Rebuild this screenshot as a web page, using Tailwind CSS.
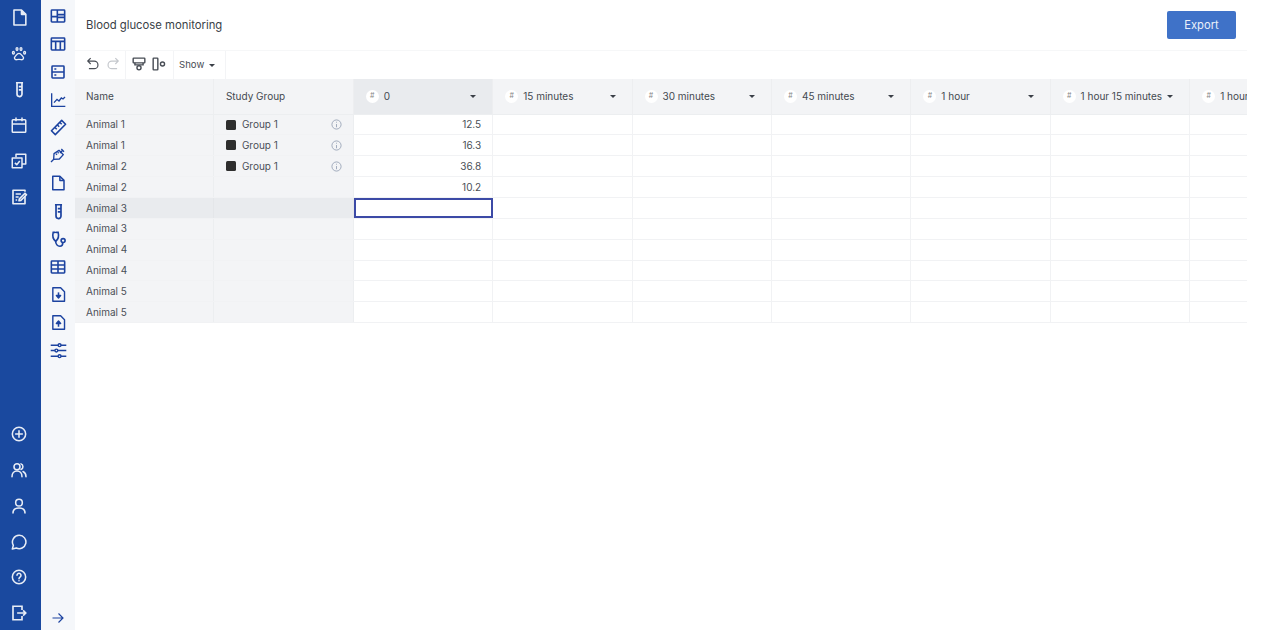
<!doctype html>
<html>
<head>
<meta charset="utf-8">
<script src="https://cdn.jsdelivr.net/npm/@tailwindcss/browser@4"></script>
</head>
<body class="bg-white">
<div class="flex h-[630px] w-[1282px] overflow-hidden font-['Inter',sans-serif] text-[#444950]">
  <!-- primary nav -->
  <nav class="flex h-[631px] w-[41px] shrink-0 flex-col items-center justify-between bg-[#1a499f] pr-[3px] text-[#e8edf6]">
    <div class="flex flex-col">
      <div class="flex h-[35.8px] items-center justify-center"><svg class="w-[19px] h-[19px]" viewBox="0 0 24 24" fill="none" stroke="currentColor" stroke-width="2" stroke-linejoin="round"><path d="M5 2.500h9.500L20 8v13.500H5z"/><path d="M14.500 2.500V8H20" fill="currentColor"/></svg></div>
      <div class="flex h-[35.8px] items-center justify-center"><svg class="w-[16px] h-[16px]" viewBox="0 0 24 24" fill="none" stroke="currentColor" stroke-width="2" stroke-linejoin="round"><ellipse cx="3.600" cy="10" rx="1.400" ry="2"/><ellipse cx="9" cy="4.600" rx="1.400" ry="2.200"/><ellipse cx="15" cy="4.600" rx="1.400" ry="2.200"/><ellipse cx="20.400" cy="10" rx="1.400" ry="2"/><path d="M12 11c-3 0-4 3-6 5-2 2.500 0 5 2.500 4.500 2-.4 5-.4 7 0 2.500.5 4.500-2 2.500-4.500-2-2-3-5-6-5z"/></svg></div>
      <div class="flex h-[35.8px] items-center justify-center"><svg class="w-[17px] h-[17px]" viewBox="0 0 24 24" fill="none" stroke="currentColor" stroke-width="2.400" stroke-linejoin="round"><path d="M7 2.500h10M8.500 2.500v16a3.500 3.500 0 0 0 7 0v-16"/><path d="M11 8h4.500M11 12.500h4.500"/></svg></div>
      <div class="flex h-[35.8px] items-center justify-center"><svg class="w-[18px] h-[18px]" viewBox="0 0 24 24" fill="none" stroke="currentColor" stroke-width="2"><rect x="3" y="5" width="18" height="16.500" rx="1"/><path d="M3 10.500h18M8 2v5M16 2v5"/></svg></div>
      <div class="flex h-[35.8px] items-center justify-center"><svg class="w-[18px] h-[18px]" viewBox="0 0 24 24" fill="none" stroke="currentColor" stroke-width="2" stroke-linejoin="round"><path d="M8 7V3h13v13h-5"/><rect x="3" y="8" width="13" height="13"/><path d="M6.500 14.500l2.500 2.500 4-5"/></svg></div>
      <div class="flex h-[35.8px] items-center justify-center"><svg class="w-[18px] h-[18px]" viewBox="0 0 24 24" fill="none" stroke="currentColor" stroke-width="2.200" stroke-linejoin="round"><path d="M20 11v10H4V3h16v2"/><path d="M7.500 8h7M7.500 12h4M7.500 16h2"/><path d="M12 17l.5-2.500L20 7l2 2-7.500 7.500z"/></svg></div>
    </div>
    <div class="flex flex-col">
      <div class="flex h-[35.8px] items-center justify-center"><svg class="w-[16px] h-[16px]" viewBox="0 0 24 24" fill="none" stroke="currentColor" stroke-width="2.300" stroke-linecap="round"><circle cx="12" cy="12" r="10"/><path d="M12 7v10M7 12h10"/></svg></div>
      <div class="flex h-[35.8px] items-center justify-center"><svg class="w-[16px] h-[16px]" viewBox="0 0 24 24" fill="none" stroke="currentColor" stroke-width="2.300" stroke-linecap="round"><circle cx="9" cy="7" r="4.500"/><path d="M1.500 22c0-5 3-8.500 7.500-8.500s7.500 3.500 7.500 8.500"/><path d="M15 2.800a4.500 4.500 0 0 1 0 8.400M18 14.300c2.800 1.200 4.500 4 4.500 7.700"/></svg></div>
      <div class="flex h-[35.8px] items-center justify-center"><svg class="w-[16px] h-[16px]" viewBox="0 0 24 24" fill="none" stroke="currentColor" stroke-width="2.300" stroke-linecap="round"><circle cx="12" cy="7" r="5"/><path d="M3 22.500c0-5 3.500-7.500 9-7.500s9 2.500 9 7.500"/></svg></div>
      <div class="flex h-[35.8px] items-center justify-center"><svg class="w-[16px] h-[16px]" viewBox="0 0 24 24" fill="none" stroke="currentColor" stroke-width="2.300" stroke-linejoin="round"><path d="M12.500 2a10 10 0 1 1-4.500 19L2 22.500l1.500-5.500A10 10 0 0 1 12.500 2z"/></svg></div>
      <div class="flex h-[35.8px] items-center justify-center"><svg class="w-[16px] h-[16px]" viewBox="0 0 24 24" fill="none" stroke="currentColor" stroke-width="2.300" stroke-linecap="round"><circle cx="12" cy="12" r="10"/><path d="M9 9.500a3 3 0 1 1 4.500 2.600c-1 .6-1.500 1.200-1.500 2.400M12 17.500v.1"/></svg></div>
      <div class="flex h-[35.8px] items-center justify-center"><svg class="w-[18px] h-[18px]" viewBox="0 0 24 24" fill="none" stroke="currentColor" stroke-width="2.200"><path d="M16 8V3H4v18h12v-5"/><path d="M9.500 12H21M17.500 8.500L21 12l-3.500 3.500"/></svg></div>
    </div>
  </nav>
  <!-- secondary nav -->
  <nav class="flex h-[630px] w-[34px] shrink-0 flex-col items-center justify-between bg-[#f5f7fa] pt-[2px] text-[#1c43a0]">
    <div class="flex flex-col">
      <div class="flex h-[27.9px] items-center justify-center"><svg class="w-[16px] h-[16px]" viewBox="0 0 24 24" fill="none" stroke="currentColor" stroke-width="2.400"><rect x="2" y="3" width="20" height="18" rx="1"/><path d="M11 3v18M11 10h11M2 13h9M11 14h11"/></svg></div>
      <div class="flex h-[27.9px] items-center justify-center"><svg class="w-[16px] h-[16px]" viewBox="0 0 24 24" fill="none" stroke="currentColor" stroke-width="2.400"><rect x="2" y="3" width="20" height="18" rx="1"/><path d="M2 8h20M8.500 8v13M15.500 8v13"/></svg></div>
      <div class="flex h-[27.9px] items-center justify-center"><svg class="w-[16px] h-[16px]" viewBox="0 0 24 24" fill="none" stroke="currentColor" stroke-width="2.400"><rect x="3" y="3" width="18" height="18" rx="1"/><path d="M3 12h18M6.500 7.500h3M6.500 16.500h3"/></svg></div>
      <div class="flex h-[27.9px] items-center justify-center"><svg class="w-[16px] h-[16px]" viewBox="0 0 24 24" fill="none" stroke="currentColor" stroke-width="2"><path d="M2.500 2v19.500H23"/><path d="M6 16l4.500-5 3 2.500 3.500-4.500 2.500 1.500 3-3"/></svg></div>
      <div class="flex h-[27.9px] items-center justify-center"><svg class="w-[17px] h-[17px]" viewBox="0 0 24 24" fill="none" stroke="currentColor" stroke-width="2.200" stroke-linejoin="round"><path d="M2 16.500L16.500 2 22 7.500 7.500 22z"/><path d="M7 12l2.500 2.500M10.500 8.500l2.500 2.500M14 5l2.500 2.500"/></svg></div>
      <div class="flex h-[27.9px] items-center justify-center"><svg class="w-[16px] h-[16px]" viewBox="0 0 24 24" fill="none" stroke="currentColor" stroke-width="2" stroke-linejoin="round"><path d="M1.500 22.500L6 18M17 3l4 4M19 5l-4 4"/><path d="M6 10l-.5 8.500 8.500-.5 6-6.500-6.500-6.500z"/><path d="M9 10l1.500 1.500M11.500 8l1.500 1.500"/></svg></div>
      <div class="flex h-[27.9px] items-center justify-center"><svg class="w-[18px] h-[18px]" viewBox="0 0 24 24" fill="none" stroke="currentColor" stroke-width="2" stroke-linejoin="round"><path d="M5 3h9.500L20 8.500V21H5z"/><path d="M14.500 3v5.500H20"/></svg></div>
      <div class="flex h-[27.9px] items-center justify-center"><svg class="w-[17px] h-[17px]" viewBox="0 0 24 24" fill="none" stroke="currentColor" stroke-width="2.400" stroke-linejoin="round"><path d="M7 2.500h10M8.500 2.500v16a3.500 3.500 0 0 0 7 0v-16"/><path d="M11 8h4.500M11 12.500h4.500"/></svg></div>
      <div class="flex h-[27.9px] items-center justify-center"><svg class="w-[17px] h-[17px]" viewBox="0 0 24 24" fill="none" stroke="currentColor" stroke-width="2.300" stroke-linecap="round"><path d="M7 2H4.500C3.500 6 3 11 8 14.500 13 11 12.500 6 11.500 2H9"/><path d="M8 14.500c0 4 2.500 7 6 7 3 0 4-2 4-5"/><circle cx="18.500" cy="13.500" r="2.800"/></svg></div>
      <div class="flex h-[27.9px] items-center justify-center"><svg class="w-[16px] h-[16px]" viewBox="0 0 24 24" fill="none" stroke="currentColor" stroke-width="2.400"><rect x="2" y="3" width="20" height="18" rx="1"/><path d="M2 9h20M2 15h20M12 3v18"/></svg></div>
      <div class="flex h-[27.9px] items-center justify-center"><svg class="w-[17px] h-[17px]" viewBox="0 0 24 24" fill="none" stroke="currentColor" stroke-width="2" stroke-linejoin="round"><path d="M4 2.500h11L20.500 8v13.500H4z"/><path d="M12 9v5" stroke-width="2.200"/><path d="M9 13.500h6L12 17z" fill="currentColor"/></svg></div>
      <div class="flex h-[27.9px] items-center justify-center"><svg class="w-[17px] h-[17px]" viewBox="0 0 24 24" fill="none" stroke="currentColor" stroke-width="2" stroke-linejoin="round"><path d="M4 2.500h11L20.500 8v13.500H4z"/><path d="M12 13v5" stroke-width="2.200"/><path d="M9 13.500h6L12 10z" fill="currentColor"/></svg></div>
      <div class="flex h-[27.9px] items-center justify-center"><svg class="w-[17px] h-[17px]" viewBox="0 0 24 24" fill="none" stroke="currentColor" stroke-width="2"><path d="M1 4.500h22M1 12h22M1 20h22"/><circle cx="13.500" cy="4.500" r="2" fill="#f5f7fa"/><circle cx="9" cy="12" r="2" fill="#f5f7fa"/><circle cx="13.500" cy="20" r="2" fill="#f5f7fa"/></svg></div>
    </div>
    <div class="flex h-[24px] items-center justify-center"><svg class="w-[12px] h-[12px]" viewBox="0 0 24 24" fill="none" stroke="currentColor" stroke-width="2.300"><path d="M1 12h21M13 3l9 9-9 9"/></svg></div>
  </nav>
  <!-- main -->
  <main class="flex w-[1172px] shrink-0 flex-col overflow-hidden">
    <header class="flex h-[51px] shrink-0 items-center justify-between border-b border-[#f6f7f8] px-[11px]">
      <h1 class="text-[11.3px] font-normal text-[#3a3f47]">Blood glucose monitoring</h1>
      <button class="flex h-[28px] w-[69px] items-center justify-center rounded-[2px] bg-[#3f72c8] text-[11.2px] text-[#eaf0fa]">Export</button>
    </header>
    <div class="flex h-[28px] shrink-0 items-center text-[#474c54]">
      <div class="flex h-full w-[51px] items-center gap-[6px] border-r border-[#f3f4f6] pb-[2px] pl-[11px]">
        <svg class="w-[14px] h-[14px]" viewBox="0 0 24 24" fill="none" stroke="currentColor" stroke-width="2"><path d="M8 2L3 7l5 5M3 7h11a6.500 6.500 0 0 1 0 13H5"/></svg>
        <svg class="w-[14px] h-[14px] text-[#c4c7cc]" viewBox="0 0 24 24" fill="none" stroke="currentColor" stroke-width="2"><path d="M16 2l5 5-5 5M21 7H10a6.500 6.500 0 0 0 0 13h9"/></svg>
      </div>
      <div class="flex h-full w-[47px] items-center gap-[6px] pb-[2px] pl-[6px]">
        <svg class="w-[14px] h-[14px]" viewBox="0 0 24 24" fill="none" stroke="currentColor" stroke-width="2.400"><rect x="2" y="2" width="20" height="8" rx="1"/><path d="M5 10v3.500h14V10"/><circle cx="12" cy="18.500" r="3.500"/></svg>
        <svg class="w-[14px] h-[14px]" viewBox="0 0 24 24" fill="none" stroke="currentColor" stroke-width="2.400"><rect x="2" y="2" width="8" height="20" rx="1"/><circle cx="18" cy="12" r="3.500"/></svg>
      </div>
      <div class="flex h-full w-[53px] items-center gap-[5px] border-x border-[#f3f4f6] pl-[5px] text-[9.6px]">Show <span class="h-0 w-0 border-x-[3px] border-t-[3px] border-x-transparent border-t-[#3a3f47]"></span></div>
    </div>
    <div class="w-[1172px] overflow-hidden">
      <div class="flex h-[35px] w-max bg-[#f3f4f6] text-[10px] text-[#444950]">
        <div class="flex w-[139.4px] items-center border-r border-[#edeef0] pl-[11px]">Name</div>
        <div class="flex w-[139.4px] items-center border-r border-[#edeef0] pl-[11.5px]">Study Group</div>
        <div class="flex w-[139.4px] items-center gap-[5px] border-r border-[#edeef0] bg-[#e9ebee] pl-[12px] pr-[16px]"><span class="flex h-[13px] w-[13px] items-center justify-center rounded-full bg-white text-[7px] text-[#888]">#</span><span>0</span><span class="ml-auto h-0 w-0 border-x-[3px] border-t-[3px] border-x-transparent border-t-[#3a3f47]"></span></div>
        <div class="flex w-[139.4px] items-center gap-[5px] border-r border-[#edeef0] pl-[12px] pr-[16px]"><span class="flex h-[13px] w-[13px] items-center justify-center rounded-full bg-white text-[7px] text-[#888]">#</span><span>15 minutes</span><span class="ml-auto h-0 w-0 border-x-[3px] border-t-[3px] border-x-transparent border-t-[#3a3f47]"></span></div>
        <div class="flex w-[139.4px] items-center gap-[5px] border-r border-[#edeef0] pl-[12px] pr-[16px]"><span class="flex h-[13px] w-[13px] items-center justify-center rounded-full bg-white text-[7px] text-[#888]">#</span><span>30 minutes</span><span class="ml-auto h-0 w-0 border-x-[3px] border-t-[3px] border-x-transparent border-t-[#3a3f47]"></span></div>
        <div class="flex w-[139.4px] items-center gap-[5px] border-r border-[#edeef0] pl-[12px] pr-[16px]"><span class="flex h-[13px] w-[13px] items-center justify-center rounded-full bg-white text-[7px] text-[#888]">#</span><span>45 minutes</span><span class="ml-auto h-0 w-0 border-x-[3px] border-t-[3px] border-x-transparent border-t-[#3a3f47]"></span></div>
        <div class="flex w-[139.4px] items-center gap-[5px] border-r border-[#edeef0] pl-[12px] pr-[16px]"><span class="flex h-[13px] w-[13px] items-center justify-center rounded-full bg-white text-[7px] text-[#888]">#</span><span>1 hour</span><span class="ml-auto h-0 w-0 border-x-[3px] border-t-[3px] border-x-transparent border-t-[#3a3f47]"></span></div>
        <div class="flex w-[139.4px] items-center gap-[5px] border-r border-[#edeef0] pl-[12px] pr-[16px]"><span class="flex h-[13px] w-[13px] items-center justify-center rounded-full bg-white text-[7px] text-[#888]">#</span><span class="whitespace-nowrap">1 hour 15 minutes</span><span class="ml-auto h-0 w-0 border-x-[3px] border-t-[3px] border-x-transparent border-t-[#3a3f47]"></span></div>
        <div class="flex w-[139.4px] items-center gap-[5px] pl-[12px] pr-[16px]"><span class="flex h-[13px] w-[13px] items-center justify-center rounded-full bg-white text-[7px] text-[#888]">#</span><span class="whitespace-nowrap">1 hour 30 minutes</span></div>
      </div>
      <div class="text-[10px] text-[#4a4f56]">
        <div class="flex h-[21px] w-max border-t border-b border-[#f1f2f4] border-t-[#eceef0]">
          <div class="flex w-[139.4px] items-center border-r border-[#eceef0] bg-[#f3f4f6] pl-[11px]">Animal 1</div>
          <div class="flex w-[139.4px] items-center border-r border-[#eceef0] bg-[#f3f4f6] pl-[11.5px]"><span class="mr-[6px] h-[10px] w-[10px] rounded-[1.500px] bg-[#2e2e2e]"></span><span>Group 1</span><svg class="ml-auto mr-[11px] h-[11px] w-[11px] text-[#9aa5b8]" viewBox="0 0 12 12" fill="none" stroke="currentColor"><circle cx="6" cy="6" r="5"/><path d="M6 5.500V9M6 3v1"/></svg></div>
          <div class="flex w-[139.4px] items-center justify-end border-r border-[#f1f2f4] pr-[11px]">12.5</div>
          <div class="w-[139.4px] border-r border-[#f1f2f4]"></div><div class="w-[139.4px] border-r border-[#f1f2f4]"></div><div class="w-[139.4px] border-r border-[#f1f2f4]"></div><div class="w-[139.4px] border-r border-[#f1f2f4]"></div><div class="w-[139.4px] border-r border-[#f1f2f4]"></div><div class="w-[139.4px]"></div>
        </div>
        <div class="flex h-[21px] w-max border-b border-[#f1f2f4]">
          <div class="flex w-[139.4px] items-center border-r border-[#eceef0] bg-[#f3f4f6] pt-px pl-[11px]">Animal 1</div>
          <div class="flex w-[139.4px] items-center border-r border-[#eceef0] bg-[#f3f4f6] pl-[11.5px]"><span class="mr-[6px] h-[10px] w-[10px] rounded-[1.500px] bg-[#2e2e2e]"></span><span class="pt-px">Group 1</span><svg class="ml-auto mr-[11px] h-[11px] w-[11px] text-[#9aa5b8]" viewBox="0 0 12 12" fill="none" stroke="currentColor"><circle cx="6" cy="6" r="5"/><path d="M6 5.500V9M6 3v1"/></svg></div>
          <div class="flex w-[139.4px] items-center justify-end border-r border-[#f1f2f4] pt-px pr-[11px]">16.3</div>
          <div class="w-[139.4px] border-r border-[#f1f2f4]"></div><div class="w-[139.4px] border-r border-[#f1f2f4]"></div><div class="w-[139.4px] border-r border-[#f1f2f4]"></div><div class="w-[139.4px] border-r border-[#f1f2f4]"></div><div class="w-[139.4px] border-r border-[#f1f2f4]"></div><div class="w-[139.4px]"></div>
        </div>
        <div class="flex h-[21px] w-max border-b border-[#f1f2f4]">
          <div class="flex w-[139.4px] items-center border-r border-[#eceef0] bg-[#f3f4f6] pt-px pl-[11px]">Animal 2</div>
          <div class="flex w-[139.4px] items-center border-r border-[#eceef0] bg-[#f3f4f6] pl-[11.5px]"><span class="mr-[6px] h-[10px] w-[10px] rounded-[1.500px] bg-[#2e2e2e]"></span><span class="pt-px">Group 1</span><svg class="ml-auto mr-[11px] h-[11px] w-[11px] text-[#9aa5b8]" viewBox="0 0 12 12" fill="none" stroke="currentColor"><circle cx="6" cy="6" r="5"/><path d="M6 5.500V9M6 3v1"/></svg></div>
          <div class="flex w-[139.4px] items-center justify-end border-r border-[#f1f2f4] pt-px pr-[11px]">36.8</div>
          <div class="w-[139.4px] border-r border-[#f1f2f4]"></div><div class="w-[139.4px] border-r border-[#f1f2f4]"></div><div class="w-[139.4px] border-r border-[#f1f2f4]"></div><div class="w-[139.4px] border-r border-[#f1f2f4]"></div><div class="w-[139.4px] border-r border-[#f1f2f4]"></div><div class="w-[139.4px]"></div>
        </div>
        <div class="flex h-[21px] w-max border-b border-[#f1f2f4]">
          <div class="flex w-[139.4px] items-center border-r border-[#eceef0] bg-[#f3f4f6] pt-px pl-[11px]">Animal 2</div>
          <div class="w-[139.4px] border-r border-[#eceef0] bg-[#f3f4f6]"></div>
          <div class="flex w-[139.4px] items-center justify-end border-r border-[#f1f2f4] pt-px pr-[11px]">10.2</div>
          <div class="w-[139.4px] border-r border-[#f1f2f4]"></div><div class="w-[139.4px] border-r border-[#f1f2f4]"></div><div class="w-[139.4px] border-r border-[#f1f2f4]"></div><div class="w-[139.4px] border-r border-[#f1f2f4]"></div><div class="w-[139.4px] border-r border-[#f1f2f4]"></div><div class="w-[139.4px]"></div>
        </div>
        <div class="flex h-[21px] w-max border-b border-[#f1f2f4]">
          <div class="flex w-[139.4px] items-center border-r border-[#e4e6e9] bg-[#e9ebee] pt-px pl-[11px]">Animal 3</div>
          <div class="w-[139.4px] border-r border-[#e4e6e9] bg-[#e9ebee]"></div>
          <div class="w-[139.4px] border-2 border-[#3c4aa6]"></div>
          <div class="w-[139.4px] border-r border-[#f1f2f4]"></div><div class="w-[139.4px] border-r border-[#f1f2f4]"></div><div class="w-[139.4px] border-r border-[#f1f2f4]"></div><div class="w-[139.4px] border-r border-[#f1f2f4]"></div><div class="w-[139.4px] border-r border-[#f1f2f4]"></div><div class="w-[139.4px]"></div>
        </div>
        <div class="flex h-[20.8px] w-max border-b border-[#f1f2f4]">
          <div class="flex w-[139.4px] items-center border-r border-[#eceef0] bg-[#f3f4f6] pl-[11px]">Animal 3</div>
          <div class="w-[139.4px] border-r border-[#eceef0] bg-[#f3f4f6]"></div>
          <div class="w-[139.4px] border-r border-[#f1f2f4]"></div><div class="w-[139.4px] border-r border-[#f1f2f4]"></div><div class="w-[139.4px] border-r border-[#f1f2f4]"></div><div class="w-[139.4px] border-r border-[#f1f2f4]"></div><div class="w-[139.4px] border-r border-[#f1f2f4]"></div><div class="w-[139.4px] border-r border-[#f1f2f4]"></div><div class="w-[139.4px]"></div>
        </div>
        <div class="flex h-[20.8px] w-max border-b border-[#f1f2f4]">
          <div class="flex w-[139.4px] items-center border-r border-[#eceef0] bg-[#f3f4f6] pl-[11px]">Animal 4</div>
          <div class="w-[139.4px] border-r border-[#eceef0] bg-[#f3f4f6]"></div>
          <div class="w-[139.4px] border-r border-[#f1f2f4]"></div><div class="w-[139.4px] border-r border-[#f1f2f4]"></div><div class="w-[139.4px] border-r border-[#f1f2f4]"></div><div class="w-[139.4px] border-r border-[#f1f2f4]"></div><div class="w-[139.4px] border-r border-[#f1f2f4]"></div><div class="w-[139.4px] border-r border-[#f1f2f4]"></div><div class="w-[139.4px]"></div>
        </div>
        <div class="flex h-[20.8px] w-max border-b border-[#f1f2f4]">
          <div class="flex w-[139.4px] items-center border-r border-[#eceef0] bg-[#f3f4f6] pl-[11px]">Animal 4</div>
          <div class="w-[139.4px] border-r border-[#eceef0] bg-[#f3f4f6]"></div>
          <div class="w-[139.4px] border-r border-[#f1f2f4]"></div><div class="w-[139.4px] border-r border-[#f1f2f4]"></div><div class="w-[139.4px] border-r border-[#f1f2f4]"></div><div class="w-[139.4px] border-r border-[#f1f2f4]"></div><div class="w-[139.4px] border-r border-[#f1f2f4]"></div><div class="w-[139.4px] border-r border-[#f1f2f4]"></div><div class="w-[139.4px]"></div>
        </div>
        <div class="flex h-[20.8px] w-max border-b border-[#f1f2f4]">
          <div class="flex w-[139.4px] items-center border-r border-[#eceef0] bg-[#f3f4f6] pl-[11px]">Animal 5</div>
          <div class="w-[139.4px] border-r border-[#eceef0] bg-[#f3f4f6]"></div>
          <div class="w-[139.4px] border-r border-[#f1f2f4]"></div><div class="w-[139.4px] border-r border-[#f1f2f4]"></div><div class="w-[139.4px] border-r border-[#f1f2f4]"></div><div class="w-[139.4px] border-r border-[#f1f2f4]"></div><div class="w-[139.4px] border-r border-[#f1f2f4]"></div><div class="w-[139.4px] border-r border-[#f1f2f4]"></div><div class="w-[139.4px]"></div>
        </div>
        <div class="flex h-[20.8px] w-max border-b border-[#f1f2f4]">
          <div class="flex w-[139.4px] items-center border-r border-[#eceef0] bg-[#f3f4f6] pl-[11px]">Animal 5</div>
          <div class="w-[139.4px] border-r border-[#eceef0] bg-[#f3f4f6]"></div>
          <div class="w-[139.4px] border-r border-[#f1f2f4]"></div><div class="w-[139.4px] border-r border-[#f1f2f4]"></div><div class="w-[139.4px] border-r border-[#f1f2f4]"></div><div class="w-[139.4px] border-r border-[#f1f2f4]"></div><div class="w-[139.4px] border-r border-[#f1f2f4]"></div><div class="w-[139.4px] border-r border-[#f1f2f4]"></div><div class="w-[139.4px]"></div>
        </div>
      </div>
    </div>
  </main>
</div>
</body>
</html>
